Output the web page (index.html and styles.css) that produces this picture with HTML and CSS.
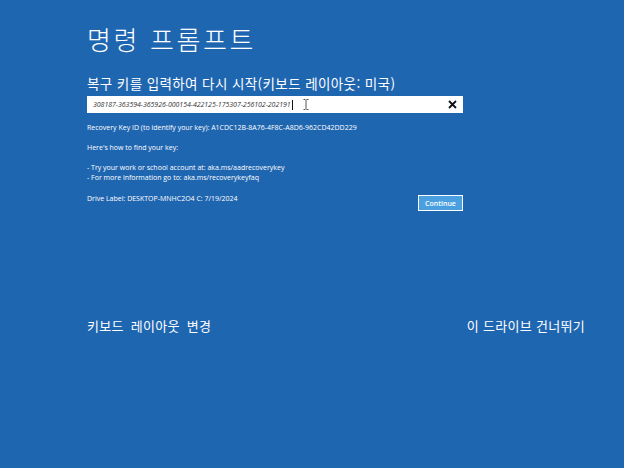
FILE: index.html
```html
<!DOCTYPE html>
<html lang="ko">
<head>
    <meta charset="UTF-8">
    <title>명령 프롬프트</title>
    <link rel="stylesheet" href="styles.css">
</head>
<body>
    <div class="screen">
        <h1 class="title">명령 프롬프트</h1>
        <div class="panel">
            <div class="prompt">복구 키를 입력하여 다시 시작(키보드 레이아웃: 미국)</div>
            <div class="key-box">
                <span class="key-text">308187-363594-365926-000154-422125-175307-256102-202191</span><span class="caret"></span>
                <svg class="ibeam" width="6" height="11" viewBox="0 0 6 11">
                    <path d="M0.5 0.5h2M3.5 0.5h2M3 1v9M0.5 10.5h2M3.5 10.5h2" stroke="#555" stroke-width="1" fill="none"/>
                </svg>
                <svg class="clear" width="9" height="9" viewBox="0 0 9 9">
                    <path d="M1 1L8 8M8 1L1 8" stroke="#111" stroke-width="1.8"/>
                </svg>
            </div>
            <div class="info">
                <p>Recovery Key ID (to identify your key): A1CDC12B-8A76-4F8C-A8D6-962CD42DD229</p>
                <p class="gap">Here's how to find your key:</p>
                <p class="gap">- Try your work or school account at: aka.ms/aadrecoverykey</p>
                <p>- For more information go to: aka.ms/recoverykeyfaq</p>
            </div>
            <div class="drive-row">
                <span class="drive-label">Drive Label: DESKTOP-MNHC2O4 C: 7/19/2024</span>
                <button class="continue">Continue</button>
            </div>
        </div>
        <div class="links">
            <span class="link-wide">키보드 레이아웃 변경</span>
            <span>이 드라이브 건너뛰기</span>
        </div>
    </div>
</body>
</html>
```

FILE: styles.css
```css
body {
    margin: 0;
    background-color: #1f66b1;
    color: #fff;
    font-family: "Noto Sans CJK KR", "Noto Sans", sans-serif;
    height: 468px;
    overflow: hidden;
}

.screen {
    padding: 24px 39px 0 87px;
}

.title {
    margin: 0;
    font-size: 26px;
    font-weight: 300;
    line-height: 30px;
    letter-spacing: 2.6px;
}

.panel {
    width: 376px;
    margin-top: 20px;
}

.prompt {
    font-size: 13.5px;
    line-height: 18px;
    letter-spacing: 0.4px;
}

.key-box {
    position: relative;
    display: flex;
    align-items: center;
    height: 17px;
    margin-top: 4px;
    background: #fff;
    padding-left: 6px;
}

.key-text {
    font-family: "Open Sans", "Liberation Sans", sans-serif;
    font-style: italic;
    font-size: 7px;
    color: #333;
    letter-spacing: -0.05px;
}

.caret {
    width: 1px;
    height: 10px;
    background: #111;
    margin-left: 1px;
}

.ibeam {
    position: absolute;
    left: 216px;
    top: 3px;
}

.clear {
    position: absolute;
    right: 6px;
    top: 4px;
}

.info {
    margin-top: 10px;
    font-family: "Open Sans", "Liberation Sans", sans-serif;
    font-size: 7px;
    line-height: 10px;
}

.info p {
    margin: 0;
}

.info p.gap {
    margin-top: 10px;
}

.drive-row {
    display: flex;
    justify-content: space-between;
    align-items: flex-start;
    margin-top: 11px;
    font-family: "Open Sans", "Liberation Sans", sans-serif;
    font-size: 7px;
}

.drive-label {
    line-height: 10px;
}

.continue {
    width: 45px;
    height: 16px;
    margin-top: 1px;
    padding: 0;
    background: #4a9fe0;
    border: 1px solid #fff;
    color: #fff;
    font-family: "Open Sans", "Liberation Sans", sans-serif;
    font-size: 7px;
    font-weight: 600;
}

.links {
    display: flex;
    justify-content: space-between;
    margin-top: 107px;
    font-size: 13px;
    letter-spacing: 0.3px;
    line-height: 16px;
}

.link-wide {
    word-spacing: 3px;
}
```
